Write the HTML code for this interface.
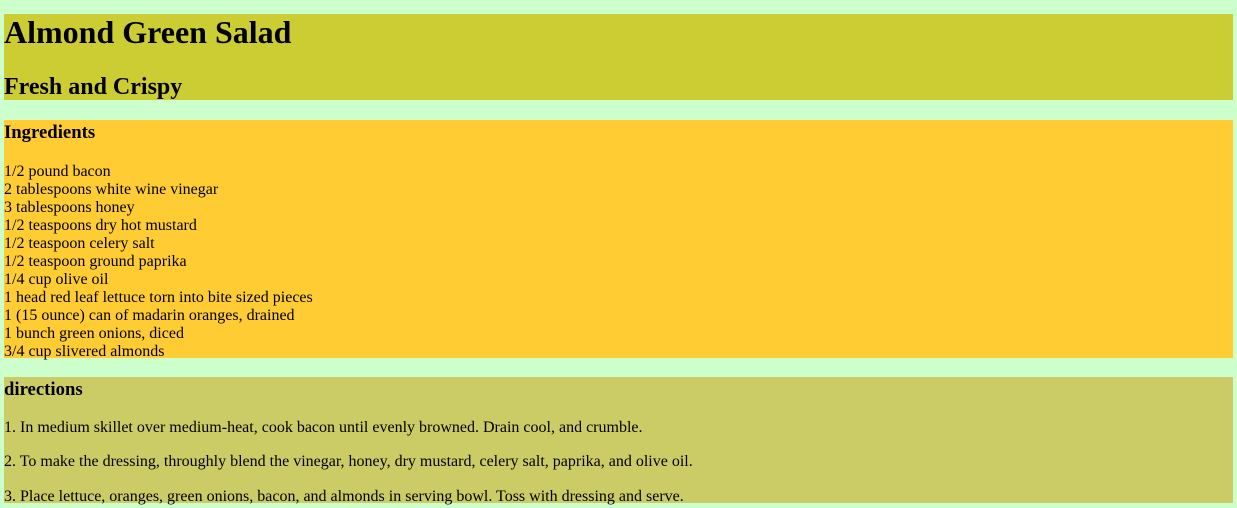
<!DOCTYPE html>
<html><head><style>
body{margin:0 4px;background:#ccffcc;font-family:"Liberation Serif",serif;font-size:16px;color:#000}
.h{background:#cccc33;margin-top:14px;height:86px}
h1{font-size:32px;margin:0;line-height:37px}
h2{font-size:24px;margin:22px 0 0;line-height:28px}
.i{background:#ffcc33;margin-top:20px;line-height:18px;padding-top:2px;height:236px}
h3{font-size:18.72px;margin:0 0 19px;line-height:21.5px}
.d{background:#cccc66;margin-top:19px;height:124px;padding-top:2px}
.d h3{margin-bottom:18px}
.d p{margin:0 0 16.5px;line-height:18px}
</style></head><body>
<div class="h"><h1>Almond Green Salad</h1><h2>Fresh and Crispy</h2></div>
<div class="i"><h3>Ingredients</h3>
1/2 pound bacon<br>2 tablespoons white wine vinegar<br>3 tablespoons honey<br>1/2 teaspoons dry hot mustard<br>1/2 teaspoon celery salt<br>1/2 teaspoon ground paprika<br>1/4 cup olive oil<br>1 head red leaf lettuce torn into bite sized pieces<br>1 (15 ounce) can of madarin oranges, drained<br>1 bunch green onions, diced<br>3/4 cup slivered almonds</div>
<div class="d"><h3>directions</h3>
<p>1. In medium skillet over medium-heat, cook bacon until evenly browned. Drain cool, and crumble.</p>
<p>2. To make the dressing, throughly blend the vinegar, honey, dry mustard, celery salt, paprika, and olive oil.</p>
<p>3. Place lettuce, oranges, green onions, bacon, and almonds in serving bowl. Toss with dressing and serve.</p></div>
</body></html>
